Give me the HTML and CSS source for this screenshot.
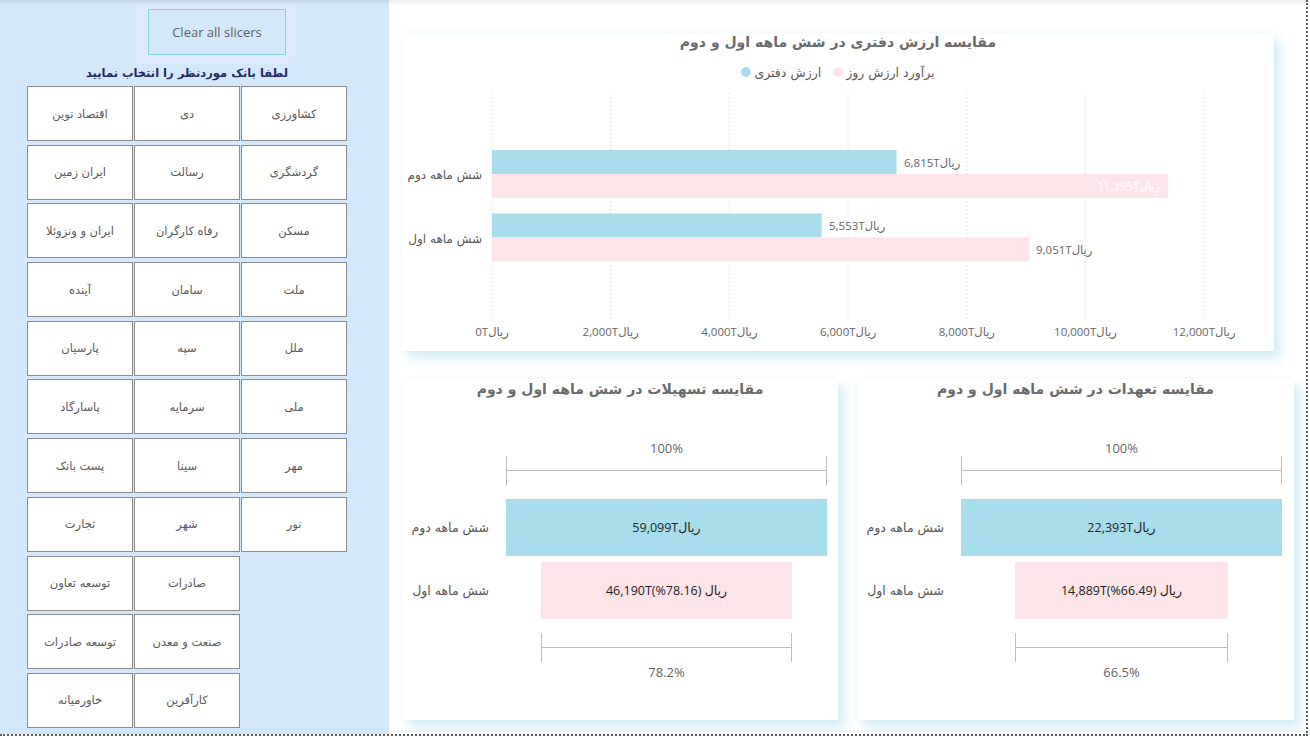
FILE: index.html
```html
<!DOCTYPE html>
<html lang="fa">
<head>
<meta charset="utf-8">
<title>Bank dashboard</title>
<link rel="stylesheet" href="styles.css">
</head>
<body>
<div class="page">
  <aside class="sidebar">
    <div class="btn-wrap"><button class="clear-btn">Clear all slicers</button></div>
    <div class="slicer-title" dir="rtl">لطفا بانک موردنظر را انتخاب نمایید</div>
    <div class="slicer" dir="rtl">
      <div class="slicer-col">
        <div class="tile">کشاورزی</div>
        <div class="tile">گردشگری</div>
        <div class="tile">مسکن</div>
        <div class="tile">ملت</div>
        <div class="tile">ملل</div>
        <div class="tile">ملی</div>
        <div class="tile">مهر</div>
        <div class="tile">نور</div>
      </div>
      <div class="slicer-col">
        <div class="tile">دی</div>
        <div class="tile">رسالت</div>
        <div class="tile">رفاه کارگران</div>
        <div class="tile">سامان</div>
        <div class="tile">سپه</div>
        <div class="tile">سرمایه</div>
        <div class="tile">سینا</div>
        <div class="tile">شهر</div>
        <div class="tile">صادرات</div>
        <div class="tile">صنعت و معدن</div>
        <div class="tile">کارآفرین</div>
      </div>
      <div class="slicer-col">
        <div class="tile">اقتصاد نوین</div>
        <div class="tile">ایران زمین</div>
        <div class="tile">ایران و ونزوئلا</div>
        <div class="tile">آینده</div>
        <div class="tile">پارسیان</div>
        <div class="tile">پاسارگاد</div>
        <div class="tile">پست بانک</div>
        <div class="tile">تجارت</div>
        <div class="tile">توسعه تعاون</div>
        <div class="tile">توسعه صادرات</div>
        <div class="tile">خاورمیانه</div>
      </div>
    </div>
  </aside>

  <main class="canvas">
    <section class="card card-top">
      <h2 class="card-title" dir="rtl">مقایسه ارزش دفتری در شش ماهه اول و دوم</h2>
      <div class="legend">
        <span class="legend-item"><span class="dot dot-blue"></span><span>ارزش دفتری</span></span>
        <span class="legend-item"><span class="dot dot-pink"></span><span>برآورد ارزش روز</span></span>
      </div>
      <svg class="bar-chart" width="872" height="270" viewBox="0 0 872 270">
        <g class="grid">
          <line x1="90" y1="12" x2="90" y2="239"/>
          <line x1="208.7" y1="12" x2="208.7" y2="239"/>
          <line x1="327.4" y1="12" x2="327.4" y2="239"/>
          <line x1="446.1" y1="12" x2="446.1" y2="239"/>
          <line x1="564.8" y1="12" x2="564.8" y2="239"/>
          <line x1="683.5" y1="12" x2="683.5" y2="239"/>
          <line x1="802.2" y1="12" x2="802.2" y2="239"/>
        </g>
        <rect class="bar-blue" x="90" y="69" width="404.5" height="24"/>
        <rect class="bar-pink" x="90" y="93" width="676.3" height="24"/>
        <rect class="bar-blue" x="90" y="132.5" width="329.6" height="24"/>
        <rect class="bar-pink" x="90" y="156.5" width="537.2" height="24"/>
        <g class="val">
          <text x="502" y="86">6,815Tریال</text>
          <text class="val-in" x="758" y="109" text-anchor="end">11,395Tریال</text>
          <text x="427" y="149">5,553Tریال</text>
          <text x="634" y="173">9,051Tریال</text>
        </g>
        <g class="cat" text-anchor="end">
          <text x="80" y="98">شش ماهه دوم</text>
          <text x="80" y="162">شش ماهه اول</text>
        </g>
        <g class="axis" text-anchor="middle">
          <text x="90" y="255">0Tریال</text>
          <text x="208.7" y="255">2,000Tریال</text>
          <text x="327.4" y="255">4,000Tریال</text>
          <text x="446.1" y="255">6,000Tریال</text>
          <text x="564.8" y="255">8,000Tریال</text>
          <text x="683.5" y="255">10,000Tریال</text>
          <text x="802.2" y="255">12,000Tریال</text>
        </g>
      </svg>
    </section>

    <div class="bottom-row">
      <section class="card card-funnel">
        <h2 class="card-title" dir="rtl">مقایسه تسهیلات در شش ماهه اول و دوم</h2>
        <div class="funnel">
          <div class="frow"><div class="flabel"></div><div class="farea"><span class="pct">100%</span></div></div>
          <div class="frow"><div class="flabel"></div><div class="farea"><div class="bracket bracket-full"></div></div></div>
          <div class="frow frow-bar1"><div class="flabel" dir="rtl">شش ماهه دوم</div><div class="farea"><div class="fbar fbar-blue" dir="ltr">59,099Tریال</div></div></div>
          <div class="frow frow-bar2"><div class="flabel" dir="rtl">شش ماهه اول</div><div class="farea"><div class="fbar fbar-pink w-782" dir="ltr">46,190T(%78.16) ریال</div></div></div>
          <div class="frow frow-br2"><div class="flabel"></div><div class="farea"><div class="bracket w-782"></div></div></div>
          <div class="frow frow-pct2"><div class="flabel"></div><div class="farea"><span class="pct">78.2%</span></div></div>
        </div>
      </section>
      <section class="card card-funnel card-funnel-r">
        <h2 class="card-title" dir="rtl">مقایسه تعهدات در شش ماهه اول و دوم</h2>
        <div class="funnel">
          <div class="frow"><div class="flabel"></div><div class="farea"><span class="pct">100%</span></div></div>
          <div class="frow"><div class="flabel"></div><div class="farea"><div class="bracket bracket-full"></div></div></div>
          <div class="frow frow-bar1"><div class="flabel" dir="rtl">شش ماهه دوم</div><div class="farea"><div class="fbar fbar-blue" dir="ltr">22,393Tریال</div></div></div>
          <div class="frow frow-bar2"><div class="flabel" dir="rtl">شش ماهه اول</div><div class="farea"><div class="fbar fbar-pink w-665" dir="ltr">14,889T(%66.49) ریال</div></div></div>
          <div class="frow frow-br2"><div class="flabel"></div><div class="farea"><div class="bracket w-665"></div></div></div>
          <div class="frow frow-pct2"><div class="flabel"></div><div class="farea"><span class="pct">66.5%</span></div></div>
        </div>
      </section>
    </div>
  </main>
</div>
</body>
</html>
```

FILE: styles.css
```css
* { box-sizing: border-box; }

html, body {
  margin: 0;
  padding: 0;
  background: #ffffff;
}

body {
  font-family: "Open Sans", "DejaVu Sans", sans-serif;
  color: #555;
}

.page {
  position: relative;
  display: flex;
  width: 1308px;
  height: 736px;
  border-right: 2px dotted #5c5c5c;
  border-bottom: 2px dotted #5c5c5c;
  overflow: hidden;
}

.page::before {
  content: "";
  position: absolute;
  top: 0;
  left: 0;
  right: 0;
  height: 6px;
  background: linear-gradient(rgba(0, 0, 0, 0.07), rgba(0, 0, 0, 0));
  pointer-events: none;
  z-index: 5;
}

/* ---------- sidebar ---------- */
.sidebar {
  width: 389px;
  flex: none;
  background: #d4e8fc;
  padding-top: 3px;
}

.btn-wrap {
  margin-left: 135px;
  width: 160px;
  height: 60px;
  padding: 6px 9px 8px 13px;
  background: rgba(226, 234, 252, 0.6);
}

.clear-btn {
  display: block;
  width: 138px;
  height: 46px;
  margin: 0;
  padding: 0;
  border: 1px solid #86d5e4;
  background: #d4e8fb;
  font-family: "Open Sans", "DejaVu Sans", sans-serif;
  font-size: 13px;
  color: #5e5e5e;
}

.slicer-title {
  margin-left: 27px;
  width: 320px;
  height: 20px;
  line-height: 20px;
  text-align: center;
  font-family: "DejaVu Sans", sans-serif;
  font-weight: bold;
  font-size: 11.5px;
  color: #262a63;
}

.slicer {
  margin-top: 3px;
  margin-left: 27px;
  width: 320px;
  display: flex;
  gap: 1px;
}

.slicer-col {
  display: flex;
  flex-direction: column;
  gap: 3.7px;
  width: 106px;
}

.tile {
  width: 106px;
  height: 55px;
  background: #ffffff;
  border: 1px solid #8c8c8c;
  display: flex;
  align-items: center;
  justify-content: center;
  font-family: "DejaVu Sans", sans-serif;
  font-size: 11.5px;
  color: #595959;
}

/* ---------- canvas ---------- */
.canvas {
  flex: 1;
  padding: 33px 0 0 13px;
}

.card {
  background: #ffffff;
  box-shadow: 7px 8px 10px rgba(165, 218, 235, 0.45), 0 0 5px rgba(205, 228, 240, 0.35);
}

.card-title {
  margin: 0;
  text-align: center;
  font-family: "DejaVu Sans", sans-serif;
  font-weight: bold;
  font-size: 14px;
  color: #6a6a6a;
}

.card-top {
  width: 872px;
  height: 318px;
}

.card-top .card-title {
  height: 18px;
  line-height: 18px;
}

.legend {
  margin-top: 12px;
  height: 18px;
  display: flex;
  justify-content: center;
  align-items: center;
  gap: 12px;
  font-family: "DejaVu Sans", sans-serif;
  font-size: 12.5px;
  color: #5a5a5a;
}

.legend-item {
  display: flex;
  align-items: center;
  gap: 3px;
}

.dot {
  width: 10px;
  height: 10px;
  border-radius: 50%;
}

.dot-blue { background: #a8deeb; }
.dot-pink { background: #fde4e9; }

.bar-chart {
  display: block;
}

.grid line {
  stroke: #cfcfcf;
  stroke-width: 1;
  stroke-dasharray: 1 3;
}

.bar-blue { fill: #a8deeb; }
.bar-pink { fill: #fde4e9; }

.val text, .axis text {
  font-family: "Open Sans", "DejaVu Sans", sans-serif;
  font-size: 11.5px;
  fill: #666666;
}

.val .val-in { fill: #ffffff; }

.cat text {
  font-family: "DejaVu Sans", sans-serif;
  font-size: 12px;
  fill: #555555;
}

/* ---------- funnel cards ---------- */
.bottom-row {
  margin-top: 28px;
  display: flex;
  gap: 19px;
}

.card-funnel {
  width: 436px;
  height: 341px;
}

.card-funnel-r {
  width: 437px;
}

.card-funnel .card-title {
  height: 20px;
  line-height: 20px;
}

.funnel {
  margin-top: 41px;
  display: flex;
  flex-direction: column;
}

.frow {
  display: flex;
  align-items: center;
}

.flabel {
  width: 87px;
  text-align: right;
  font-family: "DejaVu Sans", sans-serif;
  font-size: 12.5px;
  color: #555;
}

.farea {
  width: 321px;
  margin-left: 17px;
  display: flex;
  justify-content: center;
}

.pct {
  display: block;
  height: 16px;
  line-height: 16px;
  font-size: 13px;
  color: #666;
}

.bracket {
  height: 29px;
  border-left: 1px solid #bdbdbd;
  border-right: 1px solid #bdbdbd;
  background: linear-gradient(#bdbdbd, #bdbdbd) center / 100% 1px no-repeat;
}

.bracket-full { width: 321px; }

.frow-bar1 { margin-top: 14px; }
.frow-bar2 { margin-top: 6px; }
.frow-br2 { margin-top: 14px; }
.frow-pct2 { margin-top: 2px; }

.fbar {
  height: 57px;
  line-height: 57px;
  text-align: center;
  font-family: "Open Sans", "DejaVu Sans", sans-serif;
  font-size: 12.5px;
  color: #222;
}

.fbar-blue {
  width: 321px;
  background: #a8deeb;
}

.fbar-pink {
  background: #fde4e9;
}

.w-782 { width: 251px; }
.w-665 { width: 213px; }
```
